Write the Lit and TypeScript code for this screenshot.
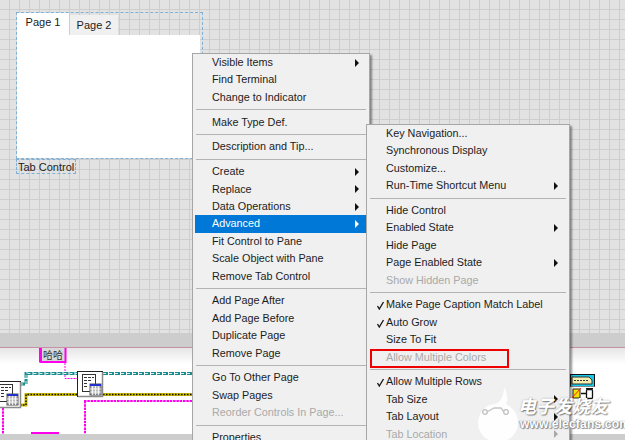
import { LitElement, html, css, svg } from "lit";
import { customElement } from "lit/decorators.js";

type Item = { t?: string; sub?: boolean; off?: boolean; on?: boolean; check?: boolean; sep?: boolean };
const S: Item = { sep: true };

const MAIN: Item[] = [
  { t: "Visible Items", sub: true }, { t: "Find Terminal" }, { t: "Change to Indicator" }, S,
  { t: "Make Type Def." }, S,
  { t: "Description and Tip..." }, S,
  { t: "Create", sub: true }, { t: "Replace", sub: true }, { t: "Data Operations", sub: true },
  { t: "Advanced", sub: true, on: true }, { t: "Fit Control to Pane" }, { t: "Scale Object with Pane" }, { t: "Remove Tab Control" }, S,
  { t: "Add Page After" }, { t: "Add Page Before" }, { t: "Duplicate Page" }, { t: "Remove Page" }, S,
  { t: "Go To Other Page" }, { t: "Swap Pages" }, { t: "Reorder Controls In Page...", off: true }, S,
  { t: "Properties" },
];
const SUB: Item[] = [
  { t: "Key Navigation..." }, { t: "Synchronous Display" }, { t: "Customize..." }, { t: "Run-Time Shortcut Menu", sub: true }, S,
  { t: "Hide Control" }, { t: "Enabled State", sub: true }, { t: "Hide Page" }, { t: "Page Enabled State", sub: true }, { t: "Show Hidden Page", off: true }, S,
  { t: "Make Page Caption Match Label", check: true }, { t: "Auto Grow", check: true }, { t: "Size To Fit" }, { t: "Allow Multiple Colors", off: true }, S,
  { t: "Allow Multiple Rows", check: true }, { t: "Tab Size", sub: true }, { t: "Tab Layout", sub: true }, { t: "Tab Location", sub: true, off: true },
];

const nodeIcon = (x: number, y: number, w = 26, h = 26) => svg`
  <g transform="translate(${x} ${y})">
    <rect x="0.5" y="0.5" width="${w - 1}" height="${h - 1}" fill="#fff" stroke="#222"/>
    <path d="M${w - 0.5} 1V${h - 0.5}H1" fill="none" stroke="#8a8a8a" stroke-width="1.5"/>
    <rect x="5.5" y="3.5" width="13" height="17" fill="#fff" stroke="#333"/>
    <path d="M7 6.5h3m1 0h3m1 0h2M7 9.5h3m1 0h3M7 12.500h3M7 15.500h3" stroke="#333"/>
    <rect x="13" y="13" width="11" height="11" fill="#bbb" stroke="#555"/>
    <rect x="13" y="13" width="11" height="2" fill="#2233cc"/>
    <path d="M15.500 15v9M18.500 15v9M21.500 15v9M13 18h11M13 21h11" stroke="#fff" stroke-width=".8"/>
  </g>`;

@customElement("app-root")
export class AppRoot extends LitElement {
  static styles = css`
    :host { display: block; width: 625px; height: 440px; position: relative; overflow: hidden;
      font-family: "Liberation Sans", Arial, sans-serif; font-size: 10.8px; color: #1c1c1c; background: #e2e2e2; }
    .panel { height: 333px; position: relative; background-color: #e2e2e2;
      background-image:
        linear-gradient(to right, transparent 9px, #cecece 9px, #cecece 10px),
        linear-gradient(to bottom, transparent 9px, #cecece 9px, #cecece 10px);
      background-size: 10px 10px; }
    .band { height: 14px; background: #cdcdcd; }
    .pink { height: 1px; background: #c88fa6; }
    .diagram { height: 86px; position: relative; background: linear-gradient(#e6e6e6, #fff 16px); }
    .diagram svg { display: block; position: absolute; left: 0; top: 0; }
    .foot { height: 6px; background: #cdcdcd; }

    .tabctl { position: absolute; left: 16px; top: 12px; width: 185px; height: 145px;
      border: 1px dashed #7fb0d5; display: flex; flex-direction: column; }
    .tabs { display: flex; align-items: flex-end; height: 22px; }
    .tab { text-align: center; box-sizing: border-box; font-size: 11px; }
    .tab.a { width: 52px; height: 22px; background: #fff; padding-top: 3px; }
    .tab.b { width: 48px; height: 20px; background: #f0f0f0; padding-top: 4px; margin-left: 1px; }
    .page { flex: 1; background: #fff; margin-right: 2px; }
    .label { position: absolute; left: 16px; top: 159px; height: 15px; line-height: 14px; width: 60px;
      box-sizing: border-box; border: 1px dashed #7fb0d5; padding-left: 1px; white-space: nowrap; font-size: 11px; }

    .menu { position: absolute; background: #f0f0f0; border: 1px solid #a6a6a6; box-sizing: border-box;
      padding: 0 2px; box-shadow: 2px 2px 2px rgba(0,0,0,.42); }
    .main { left: 192px; top: 53px; width: 178px; height: 400px; }
    .side { left: 366px; top: 124px; width: 204px; height: 330px; }
    .row { height: 17.4px; line-height: 17px; position: relative; white-space: nowrap; padding-left: 17px; }
    .row.off { color: #a9a9a9; }
    .row.on { background: #0078d7; color: #fff; }
    .sep { height: 7.45px; display: flex; align-items: center; margin: 0 1px; }
    .sep::before { content: ""; flex: 1; height: 1px; background: #b4b4b4; }
    .arrow { position: absolute; top: 4.7px; width: 0; height: 0;
      border-left: 4px solid #111; border-top: 4px solid transparent; border-bottom: 4px solid transparent; }
    .main .arrow { right: 8px; }
    .side .arrow { right: 9px; }
    .on .arrow { border-left-color: #fff; }
    .off .arrow { border-left-color: #a9a9a9; }
    .check { position: absolute; left: 7px; top: 5px; display: block; }

    .redbox { position: absolute; left: 370px; top: 349px; width: 139px; height: 19px; box-sizing: border-box;
      border: 2px solid #ee0000; }

    .mark { position: absolute; left: 477px; top: 386px; pointer-events: none; }
    .wm { position: absolute; color: #fff; white-space: nowrap; pointer-events: none; }
    .wm.cn { left: 518px; top: 394px; font: italic 700 18px/22px "Noto Sans CJK SC", sans-serif;
      text-shadow: 1px 1px 1px rgba(0,0,0,.4), 0 0 2px rgba(0,0,0,.3); }
    .wm.en { left: 520px; top: 418px; font: 700 12px/13px "Liberation Sans", sans-serif; letter-spacing: .2px;
      text-shadow: 0 0 1px #777, 1px 1px 1px #888, -1px 0 1px #aaa; }
  `;

  private row(i: Item) {
    if (i.sep) return html`<div class="sep"></div>`;
    const cls = ["row", i.off ? "off" : "", i.on ? "on" : ""].join(" ");
    return html`<div class=${cls}>
      ${i.check ? html`<svg class="check" width="9" height="9" viewBox="0 0 9 9"><path d="M1.500 5L3.300 8L7.500 1" fill="none" stroke="#111" stroke-width="1.300"/></svg>` : ""}
      ${i.t}${i.sub ? html`<span class="arrow"></span>` : ""}
    </div>`;
  }

  render() {
    return html`
      <div class="panel">
        <div class="tabctl">
          <div class="tabs"><div class="tab a">Page 1</div><div class="tab b">Page 2</div></div>
          <div class="page"></div>
        </div>
        <div class="label">Tab Control</div>
      </div>
      <div class="band"></div>
      <div class="pink"></div>
      <div class="diagram">
        <svg width="625" height="86" viewBox="0 348 625 86">
          <rect x="40" y="347" width="25" height="15" fill="#d8d8d8"/>
          <path d="M40.500 348V362H65.500V348" fill="none" stroke="#ff00ee" stroke-width="2"/>
          <path d="M39 348h3v14h-3z" fill="#ff00ee"/>
          <text x="43" y="359" font-family="'Noto Sans CJK SC',sans-serif" font-size="10" fill="#333">哈哈</text>
          <path d="M65 363V378.500H77" fill="none" stroke="#ff00ee" stroke-dasharray="2 1"/>
          <path d="M20 384H26V373.500H77M103 373.500H192" fill="none" stroke="#1a8c8c" stroke-width="3" stroke-dasharray="5 1"/>
          <path d="M20 384H26V373.500H77M103 373.500H192" fill="none" stroke="#d8f0f0" stroke-width="1" stroke-dasharray="3 3"/>
          <path d="M20 405H26V394.500H77M103 394.500H192" fill="none" stroke="#cbb900" stroke-width="3"/>
          <path d="M20 405H26V394.500H77M103 394.500H192" fill="none" stroke="#111" stroke-width="1.500" stroke-dasharray="1.500 1.500"/>
          <path d="M84 401H192M85 401V434M3 408V434" fill="none" stroke="#ff00ee" stroke-width="2" stroke-dasharray="2.500 .8"/>
          <path d="M31 433H59" stroke="#ff00ee" stroke-width="2"/>
          ${nodeIcon(77, 371)}
          ${nodeIcon(-6, 381, 27, 27)}
          <g transform="translate(570 374)">
            <rect x=".5" y=".5" width="24" height="12" fill="#17c7e8" stroke="#111"/>
            <path d="M2 3H19L22 6V10H2Z" fill="#f4eeb0" stroke="#333"/>
            <path d="M4 6.500h14" stroke="#333" stroke-dasharray="2 1"/>
            <rect x=".5" y="12.500" width="24" height="14" fill="#fff"/>
            <path d="M3 24V15H10V24Z" fill="#f5e000" stroke="#222"/>
            <path d="M1 25L11 14" stroke="#e22" />
            <path d="M11 19.500H16" stroke="#111" stroke-width="1.500"/>
            <rect x="16.500" y="15.500" width="6" height="9" rx="1" fill="#fff" stroke="#111" stroke-width="1.300"/>
            <path d="M16 14.500h7" stroke="#111"/>
          </g>
        </svg>
      </div>
      <div class="foot"></div>

      <div class="menu main">${MAIN.map((i) => this.row(i))}</div>
      <div class="menu side">${SUB.map((i) => this.row(i))}</div>
      <div class="redbox"></div>

      <svg class="mark" width="42" height="56" viewBox="0 0 42 56">
        <path d="M27 1C31 8 31 14 29 18C37 22 41 29 41 37C41 48 32 56 21 56C10 56 1 48 1 37C1 26 10 18 18 18C23 17 27 10 27 1Z" fill="#fff" opacity=".88"/>
        <path d="M10 26L17 22H24L27 26" fill="none" stroke="#c6c6c6" stroke-width="1.300"/>
        <circle cx="8" cy="26" r="2.300" fill="none" stroke="#c0c0c0" stroke-width="1.300"/>
        <circle cx="29" cy="26" r="2.300" fill="none" stroke="#c0c0c0" stroke-width="1.300"/>
      </svg>
      <div class="wm cn">电子发烧友</div>
      <div class="wm en">www.elecfans.com</div>
    `;
  }
}
